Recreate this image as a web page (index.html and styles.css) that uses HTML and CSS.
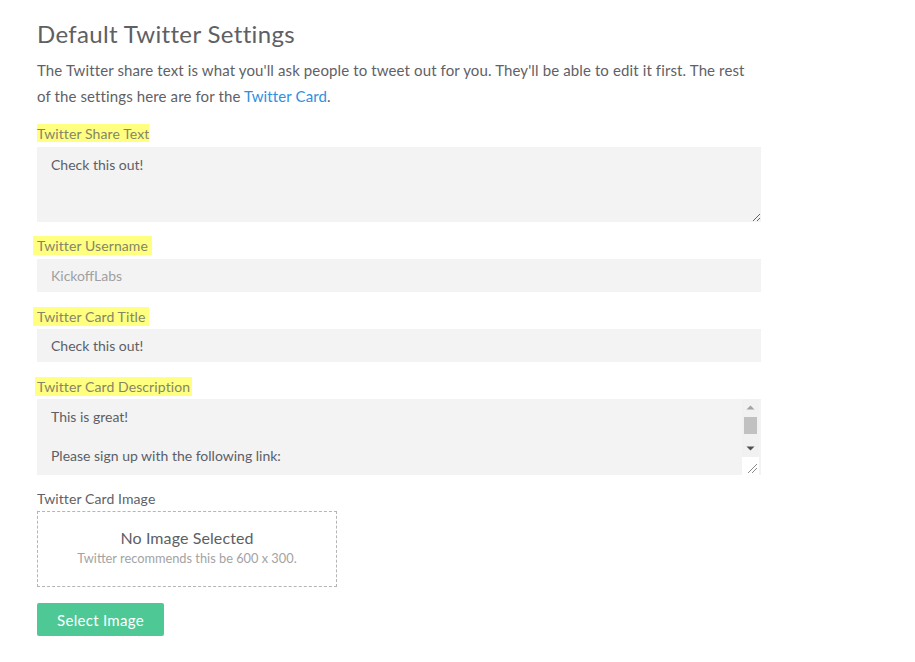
FILE: index.html
```html
<!DOCTYPE html>
<html>
<head>
<meta charset="utf-8">
<link rel="stylesheet" href="styles.css">
</head>
<body>
<div class="page">
  <h1 class="title">Default Twitter Settings</h1>
  <p class="intro">The Twitter share text is what you'll ask people to tweet out for you. They'll be able to edit it first. The rest of the settings here are for the <a class="link" href="#">Twitter Card</a>.</p>

  <div class="field">
    <label class="label"><span class="hl">Twitter Share Text</span></label>
    <textarea class="input area">Check this out!</textarea>
  </div>

  <div class="field">
    <label class="label"><span class="hl hl-wide">Twitter Username</span></label>
    <input class="input line" type="text" placeholder="KickoffLabs">
  </div>

  <div class="field">
    <label class="label tight"><span class="hl hl-wide">Twitter Card Title</span></label>
    <input class="input line" type="text" value="Check this out!">
  </div>

  <div class="field">
    <label class="label tight"><span class="hl hl-mid">Twitter Card Description</span></label>
    <div class="area-wrap">
      <textarea class="area-inner">This is great!

Please sign up with the following link:

{{link}}

Thanks!</textarea>
      <div class="sbar">
        <div class="sb-btn"><svg width="17" height="17" viewBox="0 0 17 17"><path d="M4.5 10.5 L8.5 6.5 L12.5 10.5 Z" fill="#a3a3a3"/></svg></div>
        <div class="sb-track"><div class="sb-thumb"></div></div>
        <div class="sb-btn"><svg width="17" height="17" viewBox="0 0 17 17"><path d="M4.5 6.5 L8.5 10.5 L12.5 6.5 Z" fill="#505050"/></svg></div>
        <div class="sb-corner"><svg width="17" height="17" viewBox="0 0 17 17"><path d="M6 15 L15 6 M10 15 L15 10" stroke="#8a8a8a" stroke-width="1"/></svg></div>
      </div>
    </div>
  </div>

  <div class="field">
    <label class="label plain">Twitter Card Image</label>
    <div class="dropzone">
      <div class="dz-title">No Image Selected</div>
      <div class="dz-sub">Twitter recommends this be 600 x 300.</div>
    </div>
  </div>

  <button class="btn" type="button">Select Image</button>
</div>
</body>
</html>
```
FILE: styles.css
```css
html, body {
  margin: 0;
  padding: 0;
  background: #ffffff;
}
body {
  font-family: Lato, "Open Sans", sans-serif;
  color: #5f6368;
}
.page {
  width: 724px;
  padding: 20px 0 0 37px;
}
.title {
  margin: 0;
  font-size: 24px;
  font-weight: 400;
  color: #5e6064;
  line-height: 28px;
  letter-spacing: 0.35px;
}
.intro {
  margin: 9px 0 1px 0;
  font-size: 15px;
  line-height: 26px;
  letter-spacing: 0.12px;
  color: #5f6166;
}
.link {
  color: #2f8fe0;
  text-decoration: none;
}
.field {
  display: flex;
  flex-direction: column;
}
.label {
  font-size: 14px;
  line-height: 18px;
  letter-spacing: 0.1px;
  color: #85856a;
  margin-top: 15px;
  margin-bottom: 4px;
}
.label.tight {
  margin-bottom: 3px;
}
.hl {
  background: #ffff80;
  padding: 1px 0 0 0;
}
.hl-wide {
  padding: 1px 4px 1px 4px;
  margin-left: -4px;
}
.hl-mid {
  padding: 1px 2px 1px 2px;
  margin-left: -2px;
}
.label.plain {
  color: #5f6166;
  margin-bottom: 3px;
}
.input {
  box-sizing: border-box;
  width: 724px;
  border: none;
  background: #f3f3f3;
  font-family: Lato, "Open Sans", sans-serif;
  font-size: 14px;
  color: #5c6066;
  outline: none;
  margin: 0;
}
.area {
  height: 75px;
  padding: 8px 14px;
  line-height: 19px;
  resize: vertical;
}
.line {
  height: 33px;
  padding: 0 14px;
  margin-bottom: 1px;
}
.line::placeholder {
  color: #a0a0a0;
}
.area-wrap {
  width: 724px;
  height: 76px;
  background: #f3f3f3;
  display: flex;
  flex-direction: row;
}
.area-inner {
  flex: 1;
  border: none;
  background: transparent;
  resize: none;
  overflow: hidden;
  outline: none;
  margin: 0;
  padding: 8px 14px;
  font-family: Lato, "Open Sans", sans-serif;
  font-size: 14px;
  line-height: 19.5px;
  color: #5c6066;
}
.sbar {
  width: 17px;
  margin-right: 2px;
  display: flex;
  flex-direction: column;
  background: #f1f1f1;
}
.sb-btn {
  height: 17px;
  display: flex;
}
.sb-track {
  flex: 1;
  padding: 1px 2px;
}
.sb-thumb {
  height: 17px;
  background: #c1c1c1;
}
.sb-corner {
  height: 18px;
  background: #ffffff;
  display: flex;
  align-items: flex-end;
}
.dropzone {
  box-sizing: border-box;
  width: 300px;
  height: 76px;
  border: 1px dashed #b5b5b5;
  display: flex;
  flex-direction: column;
  align-items: center;
  padding-top: 16px;
}
.dz-title {
  font-size: 16px;
  color: #5c6066;
  line-height: 20px;
  letter-spacing: 0.1px;
}
.dz-sub {
  font-size: 12.8px;
  color: #a3a3a3;
  line-height: 20px;
}
.btn {
  margin-top: 16px;
  width: 127px;
  height: 33px;
  border: none;
  border-radius: 2px;
  background: #4ec995;
  color: #ffffff;
  font-family: Lato, "Open Sans", sans-serif;
  font-size: 15px;
  letter-spacing: 0.3px;
  cursor: pointer;
}
```
